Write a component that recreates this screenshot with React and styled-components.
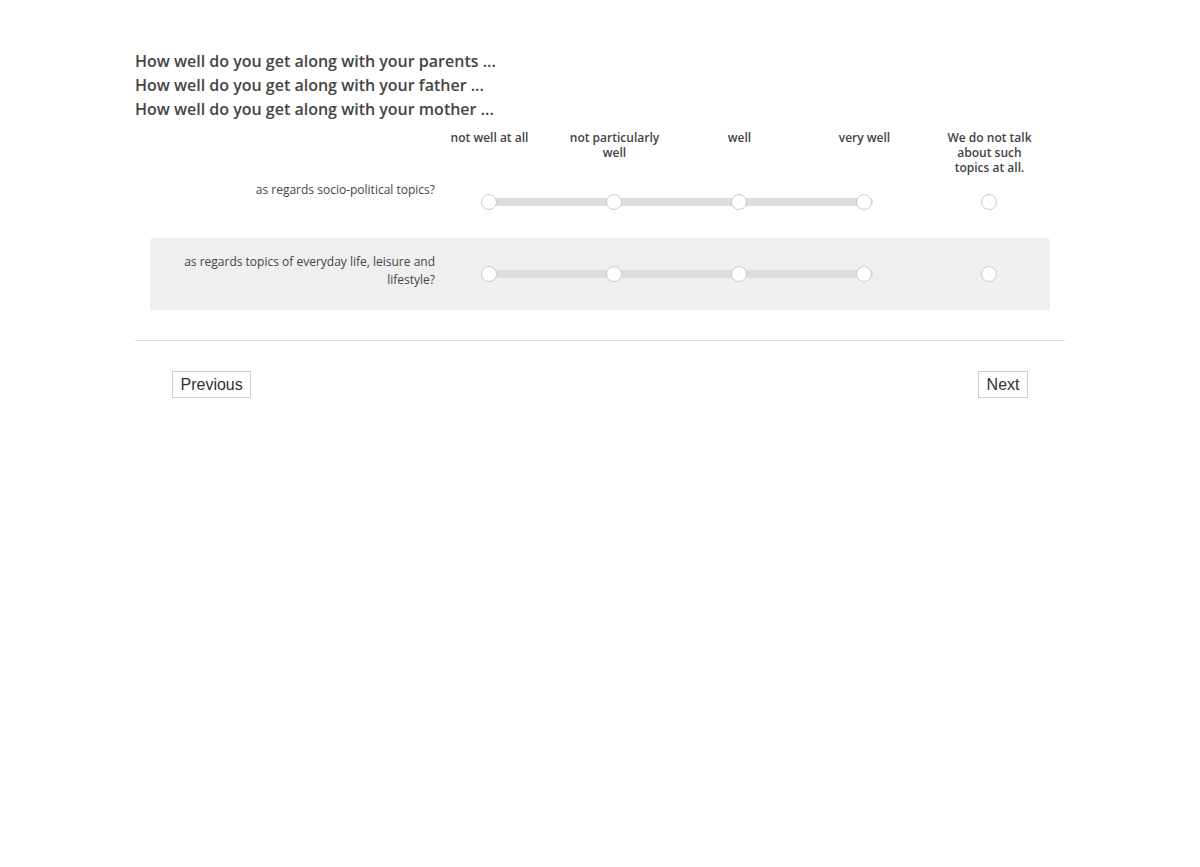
import React from 'react'
import styled, { createGlobalStyle } from 'styled-components'

const GlobalStyle = createGlobalStyle`
  body {
    margin: 0;
    background: #fff;
    font-family: "Open Sans", "Noto Sans", sans-serif;
    color: #444;
  }
`

const columns = ['not well at all', 'not particularly well', 'well', 'very well', 'We do not talk about such topics at all.']

const items = [
  { id: 1, text: 'as regards socio-political topics?', shaded: false },
  { id: 2, text: 'as regards topics of everyday life, leisure and lifestyle?', shaded: true },
]

const App = () => {
  return (
    <>
      <GlobalStyle />
      <Page>
        <Title>
          How well do you get along with your parents ...<br />
          How well do you get along with your father ...<br />
          How well do you get along with your mother ...
        </Title>

        <Header>
          <span />
          {columns.map((c) => (
            <HeadCell key={c}>{c}</HeadCell>
          ))}
        </Header>

        {items.map((item) => (
          <Row key={item.id} $shaded={item.shaded}>
            <Label>{item.text}</Label>
            <Track />
            {columns.map((c, i) => (
              <Cell key={c} $col={i + 2}>
                <Radio type="radio" name={'q' + item.id} />
              </Cell>
            ))}
          </Row>
        ))}

        <Divider />

        <Nav>
          <NavButton>Previous</NavButton>
          <NavButton>Next</NavButton>
        </Nav>
      </Page>
    </>
  )
}

const Page = styled.main`
  width: 930px;
  margin: 0 auto;
  padding-top: 49px;
`

const Title = styled.h2`
  margin: 0;
  font-size: 16px;
  font-weight: 600;
  line-height: 24px;
  color: #444;
`

const grid = `
  display: grid;
  grid-template-columns: 276px repeat(5, 125px);
  margin: 0 15px;
  width: 900px;
`

const Header = styled.div`
  ${grid}
  height: 45px;
  padding-top: 9px;
  box-sizing: border-box;
`

const HeadCell = styled.div`
  font-size: 12px;
  font-weight: 600;
  line-height: 15px;
  text-align: center;
  padding: 0 11px 0 13px;
  color: #444;
`

const Row = styled.div`
  ${grid}
  height: 72px;
  border-radius: 3px;
  background: ${(p) => (p.$shaded ? '#efefef' : 'transparent')};
`

const Label = styled.div`
  grid-column: 1;
  grid-row: 1;
  margin-right: -9px;
  padding: 15px 0 0 25px;
  font-size: 12px;
  line-height: 18px;
  text-align: right;
  color: #444;
`

const Track = styled.div`
  grid-column: 2 / 6;
  grid-row: 1;
  align-self: center;
  height: 8px;
  margin: 0 53px 0 62px;
  border-radius: 4px;
  background: #dddddd;
`

const Cell = styled.div`
  grid-column: ${(p) => p.$col};
  grid-row: 1;
  display: flex;
  align-items: center;
  justify-content: center;
  z-index: 1;
`

const Radio = styled.input`
  appearance: none;
  margin: 0;
  width: 16px;
  height: 16px;
  border-radius: 50%;
  border: 1px solid #cccccc;
  background: #fff;
  box-sizing: border-box;
  cursor: pointer;
`

const Divider = styled.hr`
  margin: 30px 0 0;
  border: none;
  border-top: 1px solid #dddddd;
`

const Nav = styled.div`
  display: flex;
  justify-content: space-between;
  padding: 30px 37px 0;
`

const NavButton = styled.button`
  font-family: "Liberation Sans", Arial, sans-serif;
  font-size: 16px;
  line-height: 19px;
  height: 27px;
  padding: 0 7.5px;
  color: #333;
  background: #fff;
  border: 1px solid #cccccc;
  border-radius: 0;
  cursor: pointer;
`

export default App
